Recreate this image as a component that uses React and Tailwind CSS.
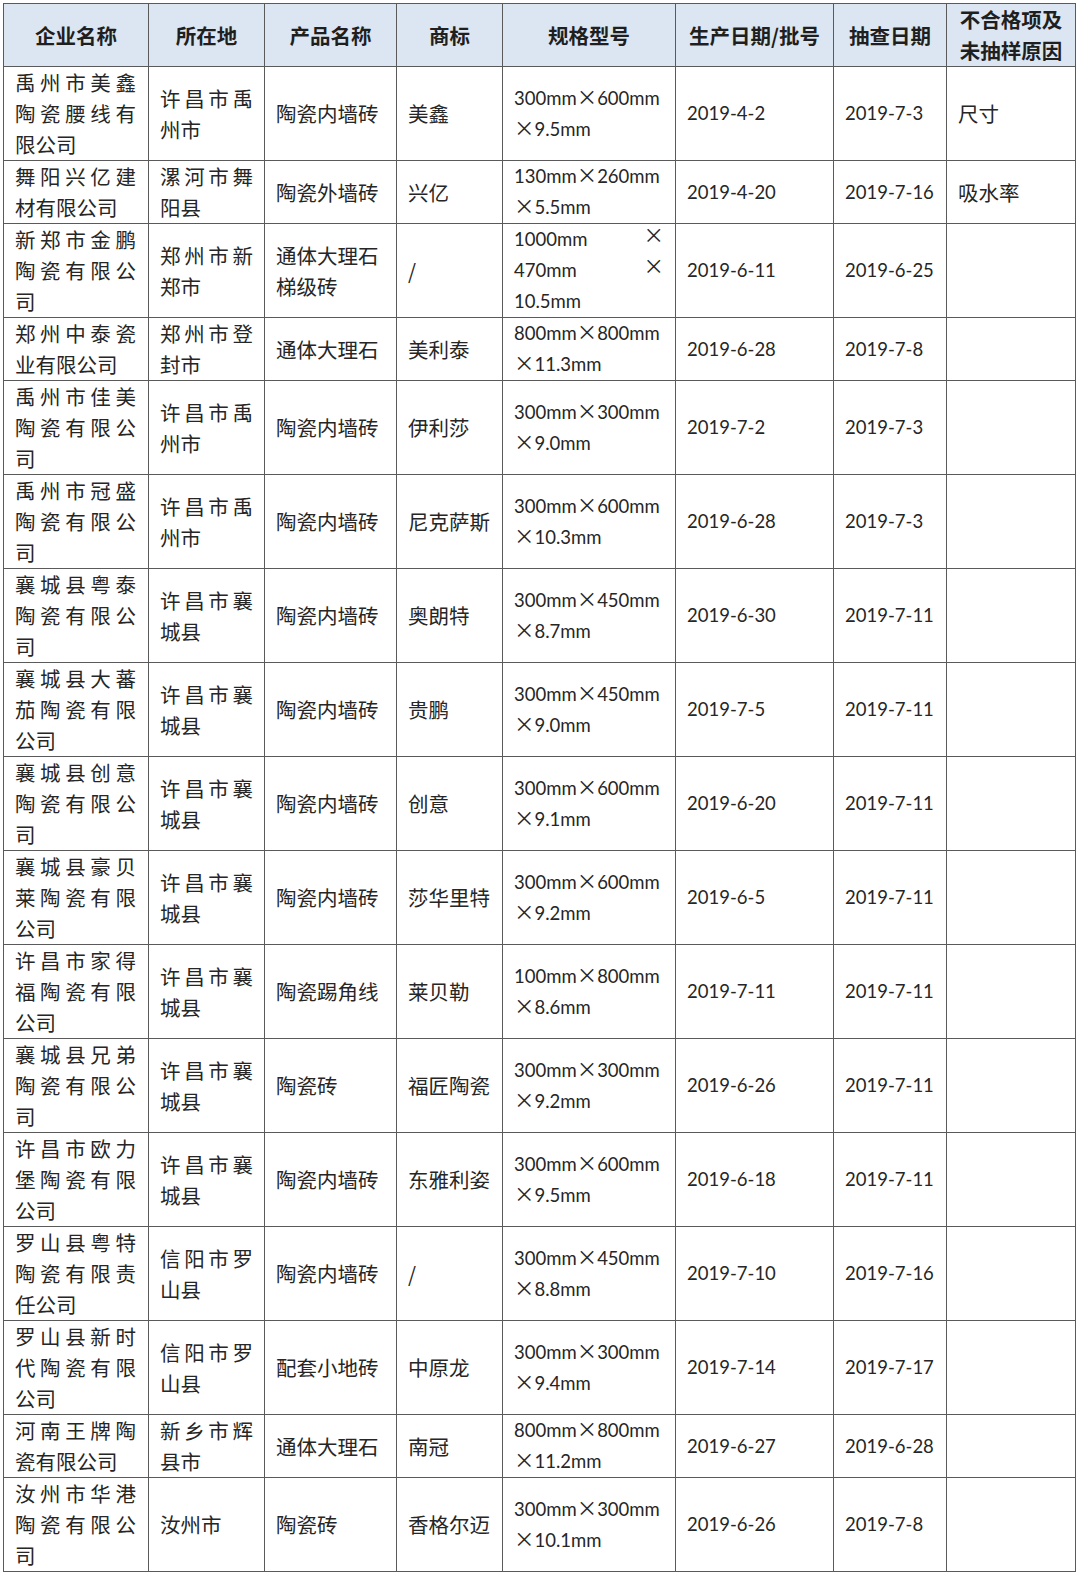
import React from "react";

const cjk = "font-['Noto_Sans_CJK_SC',sans-serif]";
const latin = "font-['Lato','Noto_Sans_CJK_SC',sans-serif] text-[18.5px]";

const rows = [
  ["禹州市美鑫陶瓷腰线有限公司", "许昌市禹州市", "陶瓷内墙砖", "美鑫", ["300mm×600mm", "×9.5mm"], "2019-4-2", "2019-7-3", "尺寸"],
  ["舞阳兴亿建材有限公司", "漯河市舞阳县", "陶瓷外墙砖", "兴亿", ["130mm×260mm", "×5.5mm"], "2019-4-20", "2019-7-16", "吸水率"],
  ["新郑市金鹏陶瓷有限公司", "郑州市新郑市", "通体大理石梯级砖", "/", "split", "2019-6-11", "2019-6-25", ""],
  ["郑州中泰瓷业有限公司", "郑州市登封市", "通体大理石", "美利泰", ["800mm×800mm", "×11.3mm"], "2019-6-28", "2019-7-8", ""],
  ["禹州市佳美陶瓷有限公司", "许昌市禹州市", "陶瓷内墙砖", "伊利莎", ["300mm×300mm", "×9.0mm"], "2019-7-2", "2019-7-3", ""],
  ["禹州市冠盛陶瓷有限公司", "许昌市禹州市", "陶瓷内墙砖", "尼克萨斯", ["300mm×600mm", "×10.3mm"], "2019-6-28", "2019-7-3", ""],
  ["襄城县粤泰陶瓷有限公司", "许昌市襄城县", "陶瓷内墙砖", "奥朗特", ["300mm×450mm", "×8.7mm"], "2019-6-30", "2019-7-11", ""],
  ["襄城县大蕃茄陶瓷有限公司", "许昌市襄城县", "陶瓷内墙砖", "贵鹏", ["300mm×450mm", "×9.0mm"], "2019-7-5", "2019-7-11", ""],
  ["襄城县创意陶瓷有限公司", "许昌市襄城县", "陶瓷内墙砖", "创意", ["300mm×600mm", "×9.1mm"], "2019-6-20", "2019-7-11", ""],
  ["襄城县豪贝莱陶瓷有限公司", "许昌市襄城县", "陶瓷内墙砖", "莎华里特", ["300mm×600mm", "×9.2mm"], "2019-6-5", "2019-7-11", ""],
  ["许昌市家得福陶瓷有限公司", "许昌市襄城县", "陶瓷踢角线", "莱贝勒", ["100mm×800mm", "×8.6mm"], "2019-7-11", "2019-7-11", ""],
  ["襄城县兄弟陶瓷有限公司", "许昌市襄城县", "陶瓷砖", "福匠陶瓷", ["300mm×300mm", "×9.2mm"], "2019-6-26", "2019-7-11", ""],
  ["许昌市欧力堡陶瓷有限公司", "许昌市襄城县", "陶瓷内墙砖", "东雅利姿", ["300mm×600mm", "×9.5mm"], "2019-6-18", "2019-7-11", ""],
  ["罗山县粤特陶瓷有限责任公司", "信阳市罗山县", "陶瓷内墙砖", "/", ["300mm×450mm", "×8.8mm"], "2019-7-10", "2019-7-16", ""],
  ["罗山县新时代陶瓷有限公司", "信阳市罗山县", "配套小地砖", "中原龙", ["300mm×300mm", "×9.4mm"], "2019-7-14", "2019-7-17", ""],
  ["河南王牌陶瓷有限公司", "新乡市辉县市", "通体大理石", "南冠", ["800mm×800mm", "×11.2mm"], "2019-6-27", "2019-6-28", ""],
  ["汝州市华港陶瓷有限公司", "汝州市", "陶瓷砖", "香格尔迈", ["300mm×300mm", "×10.1mm"], "2019-6-26", "2019-7-8", ""],
];

const headers = ["企业名称", "所在地", "产品名称", "商标", "规格型号", "生产日期/批号", "抽查日期", "不合格项及未抽样原因"];

const X = () => <span className={cjk + " text-[20.5px] leading-none"}>×</span>;

// × is full width in the original, so give it the CJK face
const withX = (s) =>
  s.split("×").map((part, i) => (
    <React.Fragment key={i}>
      {i > 0 && <X />}
      {part}
    </React.Fragment>
  ));

const td = "border border-[#5a5a5a] align-middle py-0 pl-[11px] pr-[11px]";
const line = "h-[31px] leading-[31px]";

const Spec = ({ spec }) => {
  if (spec === "split") {
    return (
      <div className={latin}>
        <div className={line + " flex justify-between"}>
          <span>1000mm</span>
          <X />
        </div>
        <div className={line + " flex justify-between"}>
          <span>470mm</span>
          <X />
        </div>
        <div className={line}>10.5mm</div>
      </div>
    );
  }
  return (
    <div className={latin + " whitespace-nowrap"}>
      {spec.map((l, i) => (
        <div key={i} className={line}>
          {withX(l)}
        </div>
      ))}
    </div>
  );
};

export default function App() {
  return (
    <div className="bg-white w-[1080px] min-h-[1574px] pt-[3px] pl-[3px]">
      <table
        className={`border-collapse table-fixed w-[1072px] text-[#262626] text-[20.5px] leading-[31px] ${cjk}`}
      >
        <colgroup>
          <col className="w-[145px]" />
          <col className="w-[116px]" />
          <col className="w-[132px]" />
          <col className="w-[106px]" />
          <col className="w-[173px]" />
          <col className="w-[158px]" />
          <col className="w-[113px]" />
          <col className="w-[129px]" />
        </colgroup>
        <thead>
          <tr className="bg-[#dce6f2]">
            {headers.map((h, i) => (
              <th
                key={i}
                className={`border border-[#5a5a5a] align-middle text-center font-semibold px-[6px] py-0 h-[62px] text-[#1f1f1f] ${
                  i === 5 ? "whitespace-nowrap" : ""
                }`}
              >
                {h}
              </th>
            ))}
          </tr>
        </thead>
        <tbody>
          {rows.map((r, i) => (
            <tr key={i}>
              <td className={td + " text-justify pr-[12px]"}>{r[0]}</td>
              <td className={td + " text-justify"}>{r[1]}</td>
              <td className={td + " pr-[6px]"}>{r[2]}</td>
              <td className={td + " pr-[4px]"}>{r[3]}</td>
              <td className={td + " pl-[10px] pr-[10px]"}>
                <Spec spec={r[4]} />
              </td>
              <td className={td + " " + latin}>{r[5]}</td>
              <td className={td + " " + latin}>{r[6]}</td>
              <td className={td}>{r[7]}</td>
            </tr>
          ))}
        </tbody>
      </table>
    </div>
  );
}
